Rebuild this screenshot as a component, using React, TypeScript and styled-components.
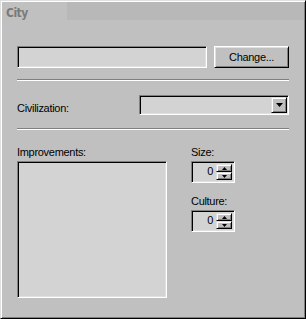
import React from 'react';
import styled, { createGlobalStyle } from 'styled-components';

const GlobalStyle = createGlobalStyle`
  html, body {
    margin: 0;
    padding: 0;
    background: #c0c0c0;
  }
  body {
    font-family: "Liberation Sans", Arial, sans-serif;
    font-size: 11px;
    color: #000;
  }
`;

const Panel = styled.div`
  box-sizing: border-box;
  width: 306px;
  height: 319px;
  background: #c0c0c0;
  border: 1px solid;
  border-color: #dfdfdf #000 #000 #dfdfdf;
  box-shadow: inset 1px 1px #fff, inset -1px -1px #808080;
  padding: 1px;
  display: flex;
  flex-direction: column;
`;

const Header = styled.div`
  display: flex;
  height: 18px;
`;

const Tab = styled.div`
  width: 65px;
  box-sizing: border-box;
  padding: 4px 0 0 4px;
  line-height: 14px;
  font-family: "DejaVu Sans Condensed", "Liberation Sans", sans-serif;
  font-size: 12px;
  font-weight: bold;
  letter-spacing: -0.5px;
  color: #7a7a7a;
`;

const TabFill = styled.div`
  flex: 1;
  background: #b8b8b8;
`;

const Body = styled.div`
  padding: 26px 15px 0 15px;
  letter-spacing: -0.3px;
`;

const Row = styled.div<{ $top?: number; $align?: string }>`
  display: flex;
  align-items: ${p => p.$align || 'stretch'};
  justify-content: space-between;
  gap: 7px;
  margin-top: ${p => p.$top || 0}px;
`;

const Sunken = styled.div`
  box-sizing: border-box;
  background: #d3d3d3;
  border: 1px solid;
  border-color: #808080 #fff #fff #808080;
  box-shadow: inset 1px 1px #000, inset -1px -1px #dfdfdf;
`;

const NameField = styled(Sunken)`
  flex: 1;
  height: 22px;
`;

const Button = styled.button`
  box-sizing: border-box;
  width: 75px;
  height: 22px;
  padding: 0;
  background: #c0c0c0;
  border: 1px solid;
  border-color: #fff #000 #000 #fff;
  box-shadow: inset 1px 1px #dfdfdf, inset -1px -1px #808080;
  font-family: inherit;
  font-size: 11px;
  letter-spacing: -0.3px;
  color: #000;
`;

const Separator = styled.div<{ $top: number }>`
  height: 0;
  border-top: 1px solid #808080;
  border-bottom: 1px solid #fff;
  margin-top: ${p => p.$top}px;
`;

const Label = styled.div<{ $top?: number }>`
  line-height: 13px;
  margin-top: ${p => p.$top || 0}px;
  white-space: nowrap;
`;

const Select = styled(Sunken)`
  width: 150px;
  height: 20px;
  display: flex;
  justify-content: flex-end;
  padding: 1px;
`;

const ArrowButton = styled.div<{ $w: number; $h: number }>`
  box-sizing: border-box;
  width: ${p => p.$w}px;
  height: ${p => p.$h}px;
  background: #c0c0c0;
  border: 1px solid;
  border-color: #dfdfdf #000 #000 #dfdfdf;
  box-shadow: inset 1px 1px #fff, inset -1px -1px #808080;
  display: flex;
  align-items: center;
  justify-content: center;
`;

const Columns = styled.div`
  display: flex;
  gap: 24px;
  margin-top: 16px;
`;

const Column = styled.div<{ $w?: number }>`
  display: flex;
  flex-direction: column;
  width: ${p => (p.$w ? `${p.$w}px` : 'auto')};
`;

const ListBox = styled(Sunken)`
  width: 150px;
  height: 137px;
  margin-top: 2px;
`;

const Spin = styled(Sunken)`
  width: 44px;
  height: 22px;
  margin-top: 2px;
  padding: 2px;
  display: flex;
`;

const SpinValue = styled.div`
  flex: 1;
  text-align: right;
  padding-right: 3px;
  line-height: 14px;
`;

const SpinButtons = styled.div`
  display: flex;
  flex-direction: column;
`;

const Arrow: React.FC<{ up?: boolean; w: number; h: number }> = ({ up, w, h }) => (
  <svg width={w} height={h} viewBox={`0 0 ${w} ${h}`}>
    <polygon
      points={up ? `${w / 2},0 ${w},${h} 0,${h}` : `0,0 ${w},0 ${w / 2},${h}`}
      fill="#000"
    />
  </svg>
);

const SpinBox: React.FC<{ value: number }> = ({ value }) => (
  <Spin>
    <SpinValue>{value}</SpinValue>
    <SpinButtons>
      <ArrowButton $w={16} $h={9}>
        <Arrow up w={5} h={3} />
      </ArrowButton>
      <ArrowButton $w={16} $h={9}>
        <Arrow w={5} h={3} />
      </ArrowButton>
    </SpinButtons>
  </Spin>
);

const App: React.FC = () => (
  <>
    <GlobalStyle />
    <Panel>
      <Header>
        <Tab>City</Tab>
        <TabFill />
      </Header>
      <Body>
        <Row>
          <NameField />
          <Button>Change...</Button>
        </Row>
        <Separator $top={11} />
        <Row $top={14} $align="flex-end">
          <Label>Civilization:</Label>
          <Select>
            <ArrowButton $w={16} $h={16}>
              <Arrow w={7} h={4} />
            </ArrowButton>
          </Select>
        </Row>
        <Separator $top={13} />
        <Columns>
          <Column $w={150}>
            <Label>Improvements:</Label>
            <ListBox />
          </Column>
          <Column>
            <Label>Size:</Label>
            <SpinBox value={0} />
            <Label $top={12}>Culture:</Label>
            <SpinBox value={0} />
          </Column>
        </Columns>
      </Body>
    </Panel>
  </>
);

export default App;
